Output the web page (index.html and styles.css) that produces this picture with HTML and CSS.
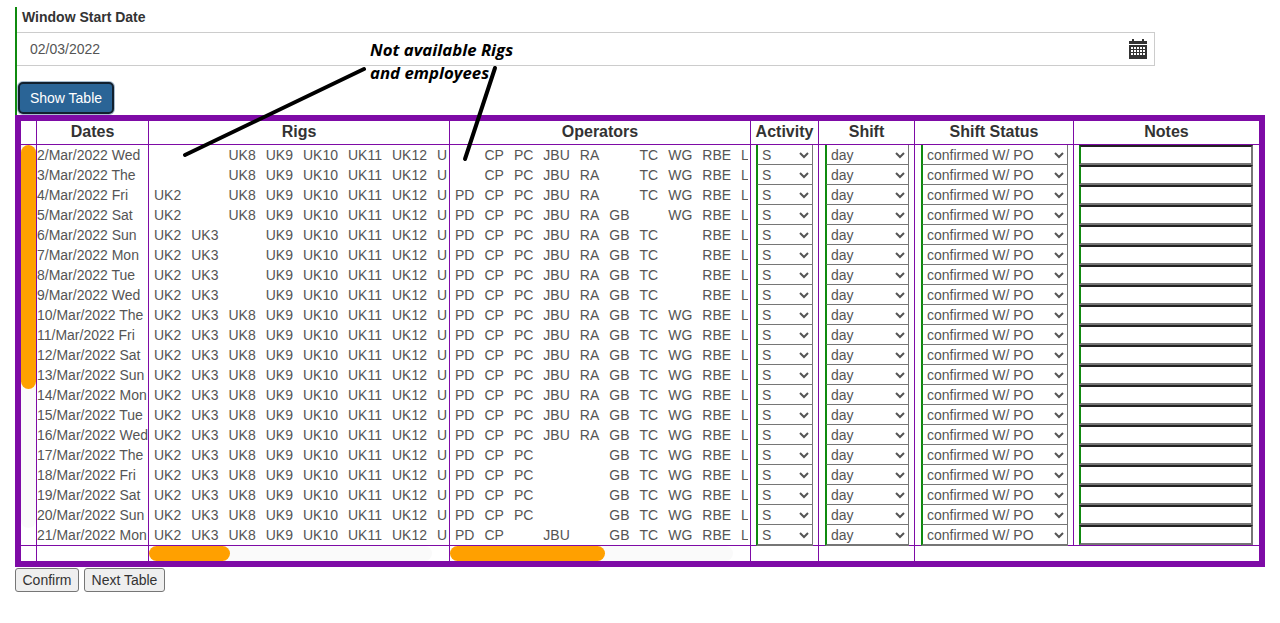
FILE: index.html
```html
<!DOCTYPE html>
<html lang="en">
<head>
    <meta charset="UTF-8">
    <title>Shift Planner</title>
    <link rel="stylesheet" href="styles.css">
</head>
<body>
    <section class="window-form">
        <label class="field-label" for="startDate">Window Start Date</label>
        <div class="date-field">
            <input type="text" id="startDate" value="02/03/2022">
            <svg class="cal-icon" viewBox="0 0 18 20" width="18" height="20">
                <rect x="3" y="0" width="2" height="3" fill="#333"/>
                <rect x="13" y="0" width="2" height="3" fill="#333"/>
                <rect x="0" y="2" width="18" height="3" fill="#333"/>
                <path fill="#333" fill-rule="evenodd" d="M0 6h18v14H0z M2 8v2h2V8z M5 8v2h2V8z M8 8v2h2V8z M11 8v2h2V8z M14 8v2h2V8z M2 11v2h2v-2z M5 11v2h2v-2z M8 11v2h2v-2z M11 11v2h2v-2z M14 11v2h2v-2z M2 14v2h2v-2z M5 14v2h2v-2z M8 14v2h2v-2z M11 14v2h2v-2z M14 14v2h2v-2z"/>
            </svg>
        </div>
        <button type="button" class="btn-show">Show Table</button>
    </section>

    <div class="frame">
        <table class="plan">
            <colgroup>
                <col class="c-scroll"><col class="c-date"><col class="c-pool"><col class="c-pool">
                <col class="c-activity"><col class="c-shift"><col class="c-status"><col class="c-notes">
            </colgroup>
            <thead>
                <tr>
                    <th class="no-edge"></th>
                    <th>Dates</th>
                    <th>Rigs</th>
                    <th>Operators</th>
                    <th>Activity</th>
                    <th>Shift</th>
                    <th>Shift Status</th>
                    <th>Notes</th>
                </tr>
            </thead>
            <tbody id="planBody"></tbody>
            <tfoot>
                <tr>
                    <td class="no-edge"></td>
                    <td></td>
                    <td><div class="h-track rigs-track"><div class="h-thumb rigs-thumb"></div></div></td>
                    <td><div class="h-track ops-track"><div class="h-thumb ops-thumb"></div></div></td>
                    <td></td>
                    <td></td>
                    <td colspan="2"></td>
                </tr>
            </tfoot>
        </table>
    </div>

    <div class="actions">
        <button type="button" class="btn-plain">Confirm</button>
        <button type="button" class="btn-plain">Next Table</button>
    </div>

    <!-- annotation drawn on top of the screenshot -->
    <div class="note-text">Not available Rigs<br>and employees</div>
    <svg class="note-lines" width="1280" height="623">
        <line x1="364" y1="69" x2="185" y2="155" stroke="#000" stroke-width="4" stroke-linecap="round"/>
        <line x1="495" y1="68" x2="465" y2="159" stroke="#000" stroke-width="4" stroke-linecap="round"/>
    </svg>

    <script src="script.js"></script>
</body>
</html>
```

FILE: styles.css
```css
body {
    font-family: "Liberation Sans", Arial, sans-serif;
    margin: 0;
    padding: 7px 0 0;
    background-color: #fff;
    color: #555;
    font-size: 14px;
}

.window-form {
    margin-left: 15px;
    border-left: 2px solid #0f8a0f;
    height: 108px;
    box-sizing: border-box;
    padding-top: 3px;
}

.field-label {
    display: block;
    margin-left: 5px;
    font-size: 14px;
    line-height: 14px;
    font-weight: bold;
    color: #333;
}

.date-field {
    display: flex;
    align-items: center;
    width: 1138px;
    height: 34px;
    margin-top: 8px;
    box-sizing: border-box;
    border: 1px solid #ccc;
    border-left: none;
    padding: 0 7px 0 13px;
}

.date-field input {
    flex: 1;
    border: none;
    outline: none;
    padding: 0;
    font-family: inherit;
    font-size: 14px;
    color: #555;
}

.cal-icon {
    display: block;
}

.btn-show {
    display: block;
    width: 96px;
    height: 32px;
    margin: 16px 0 0 1px;
    padding: 0;
    border: 2px solid #12202e;
    border-radius: 5px;
    box-shadow: 0 0 0 1px #a8bccf;
    background-color: #2a6496;
    color: #fff;
    font-family: inherit;
    font-size: 14px;
}

.frame {
    margin-left: 15px;
    width: 1250px;
    box-sizing: border-box;
    border: 6px solid #7e0ba6;
}

.plan {
    table-layout: fixed;
    width: 1238px;
    border-collapse: separate;
    border-spacing: 0;
}

.c-scroll { width: 15px; }
.c-date { width: 112px; }
.c-pool { width: 301px; }
.c-activity { width: 68px; }
.c-shift { width: 96px; }
.c-status { width: 159px; }
.c-notes { width: 186px; }

.plan th,
.plan td {
    padding: 0;
    border-left: 1px solid #7e0ba6;
    box-sizing: border-box;
}

.plan th {
    height: 24px;
    padding-bottom: 2px;
    border-bottom: 1px solid #7e0ba6;
    font-size: 16px;
    font-weight: bold;
    color: #333;
    text-align: center;
}

.plan tbody td {
    height: 20px;
    line-height: 20px;
    white-space: nowrap;
}

.plan tbody tr:last-child td,
.plan tbody td.v-cell {
    border-bottom: 1px solid #7e0ba6;
}

.plan tbody tr:last-child td {
    height: 21px;
}

.plan tfoot td {
    height: 15px;
}

.plan .no-edge,
.plan .v-cell {
    border-left: none;
}

.v-cell {
    vertical-align: top;
}

.v-track {
    height: 383px;
    border-radius: 0 0 8px 8px;
    background-color: #fafafa;
}

.v-thumb {
    height: 244px;
    border-radius: 8px;
    background-color: #ffa000;
}

.pool {
    display: flex;
    overflow: hidden;
    margin-right: 2px;
}

.pool span {
    flex: none;
    padding: 0 5px;
}

.pool .na {
    visibility: hidden;
}

.h-track {
    height: 15px;
    border-radius: 8px;
    background-color: #fafafa;
}

.rigs-track { width: 283px; }
.rigs-thumb { width: 81px; }
.ops-track { width: 283px; }
.ops-thumb { width: 155px; }

.h-thumb {
    height: 15px;
    border-radius: 8px;
    background-color: #ffa000;
}

/* one pixel taller than the row, so the grey bottom edge sits over the next row */
.cell-select {
    display: block;
    height: 21px;
    margin-bottom: -1px;
    box-sizing: border-box;
    padding: 0;
    border: none;
    border-right: 1px solid #767676;
    border-bottom: 2px solid #767676;
    border-left: 2px solid #0f8a0f;
    border-radius: 0;
    background-color: #fff;
    font-family: inherit;
    font-size: 14px;
    color: #555;
}

.sel-activity { width: 57px; margin-left: 5px; }
.sel-shift { width: 84px; margin-left: 6px; }
.sel-status { width: 147px; margin-left: 6px; }

.cell-note {
    display: block;
    width: 174px;
    height: 20px;
    margin-left: 5px;
    box-sizing: border-box;
    padding: 0;
    border-style: solid;
    border-width: 2px;
    border-color: #222 #767676 #767676 #0f8a0f;
    background-color: #fff;
}

.actions {
    display: flex;
    gap: 5px;
    margin: 1px 0 0 15px;
}

.btn-plain {
    height: 24px;
    padding: 0 6.5px;
    border: 1px solid #767676;
    border-radius: 3px;
    background-color: #efefef;
    color: #333;
    font-family: inherit;
    font-size: 14px;
}

.note-text {
    position: absolute;
    left: 370px;
    top: 38px;
    font-family: "Open Sans", sans-serif;
    font-size: 16.8px;
    line-height: 23px;
    font-weight: bold;
    font-style: italic;
    color: #000;
}

.note-lines {
    position: absolute;
    left: 0;
    top: 0;
    pointer-events: none;
}
```

FILE: script.js
```js
const days = ['Wed', 'The', 'Fri', 'Sat', 'Sun', 'Mon', 'Tue'];
const rigs = ['UK2', 'UK3', 'UK8', 'UK9', 'UK10', 'UK11', 'UK12', 'UK13'];
const ops = ['PD', 'CP', 'PC', 'JBU', 'RA', 'GB', 'TC', 'WG', 'RBE', 'LM'];

function rigsOff(d) {
    const off = [];
    if (d <= 3) off.push('UK2');
    if (d <= 5) off.push('UK3');
    if (d >= 6 && d <= 9) off.push('UK8');
    return off;
}

function opsOff(d) {
    if (d <= 3) return ['PD', 'GB'];
    if (d === 4) return ['GB'];
    if (d === 5) return ['TC'];
    if (d <= 9) return ['WG'];
    if (d <= 16) return [];
    if (d <= 20) return ['JBU', 'RA'];
    return ['PC', 'RA'];
}

function pool(names, off) {
    const spans = names.map(n => `<span${off.includes(n) ? ' class="na"' : ''}>${n}</span>`);
    return `<div class="pool">${spans.join('')}</div>`;
}

let html = '';
for (let d = 2; d <= 21; d++) {
    const scroll = d === 2
        ? '<td class="v-cell" rowspan="20"><div class="v-track"><div class="v-thumb"></div></div></td>'
        : '';
    html += `<tr>${scroll}
        <td>${d}/Mar/2022 ${days[(d - 2) % 7]}</td>
        <td>${pool(rigs, rigsOff(d))}</td>
        <td>${pool(ops, opsOff(d))}</td>
        <td><select class="cell-select sel-activity"><option>S</option></select></td>
        <td><select class="cell-select sel-shift"><option>day</option></select></td>
        <td><select class="cell-select sel-status"><option>confirmed W/ PO</option></select></td>
        <td><input type="text" class="cell-note"></td>
    </tr>`;
}
document.getElementById('planBody').innerHTML = html;
```
